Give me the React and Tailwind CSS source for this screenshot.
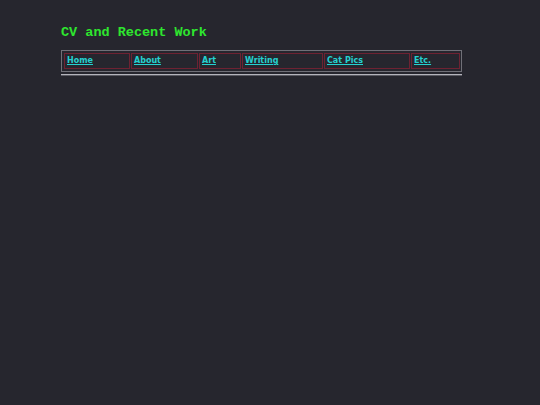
import React from "react";

const links = [
  { label: "Home", w: "w-[66px]" },
  { label: "About", w: "w-[67px]" },
  { label: "Art", w: "w-[42px]" },
  { label: "Writing", w: "w-[81px]" },
  { label: "Cat Pics", w: "w-[86px]" },
  { label: "Etc.", w: "w-[49px]" },
];

const App = () => {
  return (
    <div className="min-h-[405px] bg-[#26262e] pt-[25px] pl-[61px]">
      <h1 className="text-[13.5px] leading-[16px] font-bold text-[#2ee62e] font-['Liberation_Mono',monospace]">
        CV and Recent Work
      </h1>

      {/* nav bar */}
      <div className="mt-[9px] w-[401px] border border-[#707078] py-[2px] pl-[2px] pr-px flex gap-px">
        {links.map((link) => (
          <div
            key={link.label}
            className={`${link.w} border border-[#6e2232] px-[2px] py-px text-[8px] leading-[12px] font-bold font-['DejaVu_Sans',sans-serif]`}
          >
            <a href="#" className="underline text-[#25d0d0]">
              {link.label}
            </a>
          </div>
        ))}
      </div>

      <div className="mt-[2px] w-[401px] h-[2px] border-t border-[#b4b4bc] border-b border-b-[#5a5a62]"></div>
    </div>
  );
};

export default App;
